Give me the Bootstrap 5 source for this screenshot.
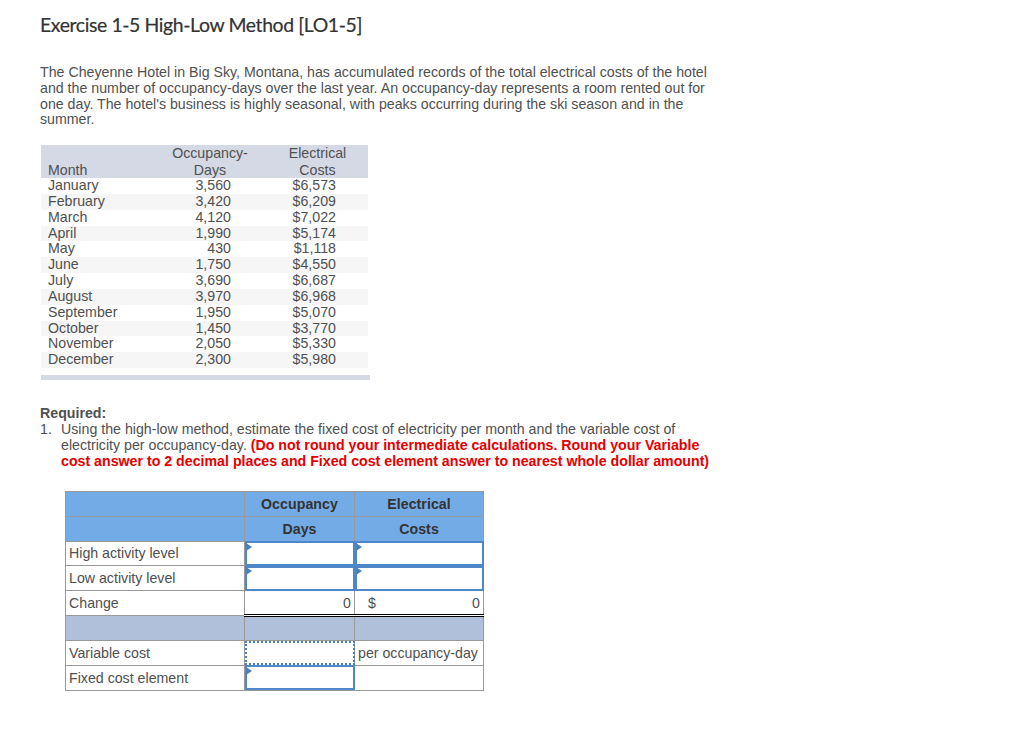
<!DOCTYPE html>
<html lang="en">
<head>
<meta charset="utf-8">
<title>Exercise 1-5</title>
<link href="https://cdn.jsdelivr.net/npm/bootstrap@5.3.0/dist/css/bootstrap.min.css" rel="stylesheet">
<style>
body{background:#fff;color:#505050;font-family:"Liberation Sans",Arial,sans-serif;font-size:14.2px;line-height:15.9px;}
.sheet{padding:13px 0 0 41px;width:1024px;}
.ex-title{font-family:Lato,"Open Sans",sans-serif;font-size:19.4px;line-height:24px;font-weight:400;color:#333;letter-spacing:-.38px;margin:0 0 28px -1px;-webkit-text-stroke:.2px #333;}
.intro{width:680px;line-height:15.75px;margin:0 0 17px -1px;}
.data-wrap{width:329px;border-bottom:5px solid #d5d9e5;padding-bottom:7px;}
.data-tbl{width:327px;table-layout:fixed;border-collapse:collapse;}
.data-tbl td,.data-tbl th{padding:0;font-weight:400;line-height:15.85px;height:15.85px;vertical-align:bottom;}
.data-tbl thead th{height:16.5px;line-height:16px;vertical-align:top;}
.data-tbl thead tr{background:#d5d9e5;}
.data-tbl tbody tr:nth-child(even){background:#f6f6f6;}
.data-tbl .c-m{width:119px;padding-left:7px;}
.data-tbl .c-o{width:93px;text-align:center;padding-left:7px;}
.data-tbl .c-e{width:115px;text-align:center;padding-left:14px;}
.data-tbl .num-o{text-align:right;padding-right:22px;}
.data-tbl .num-e{text-align:right;padding-right:32px;}
.req{margin:26px 0 0 -1px;width:690px;}
.req-head{font-weight:700;}
.req-row{display:flex;}
.req-n{width:21px;flex:none;}
.req-red{color:#e60000;font-weight:700;}
.calc{margin:21px 0 0 24px;width:418px;table-layout:fixed;border-collapse:collapse;}
.calc td{border:1px solid #999;height:24.9px;padding:0 3px;line-height:16px;position:relative;vertical-align:middle;}
.w1{width:179px;}.w2{width:110px;}.w3{width:129px;}
.blue td{background:#73abe6;text-align:center;font-weight:700;color:#333;letter-spacing:.05px;}
.slate td{background:#b0bfda;}
.ans{outline:2px solid #5087c8;outline-offset:-2px;}
.ans::before{content:"";position:absolute;left:1px;top:1px;border-left:6px solid #4a7fc0;border-top:4px solid transparent;border-bottom:4px solid transparent;}
.dots{outline:2px dotted #4a7fc0;outline-offset:-2px;}
.dbl td.tot{border-bottom:3px double #000;border-top:1px solid #000;}
.splitcell{display:flex;justify-content:space-between;padding:0 0 0 10px;}
</style>
</head>
<body>
<div class="sheet">
<h1 class="ex-title">Exercise 1-5 High-Low Method [LO1-5]</h1>
<p class="intro">The Cheyenne Hotel in Big Sky, Montana, has accumulated records of the total electrical costs of the hotel and the number of occupancy-days over the last year. An occupancy-day represents a room rented out for one day. The hotel's business is highly seasonal, with peaks occurring during the ski season and in the summer.</p>
<div class="data-wrap">
<table class="data-tbl">
<thead>
<tr><th class="c-m"></th><th class="c-o">Occupancy-</th><th class="c-e">Electrical</th></tr>
<tr><th class="c-m">Month</th><th class="c-o">Days</th><th class="c-e">Costs</th></tr>
</thead>
<tbody>
<tr><td class="c-m">January</td><td class="num-o">3,560</td><td class="num-e">$6,573</td></tr>
<tr><td class="c-m">February</td><td class="num-o">3,420</td><td class="num-e">$6,209</td></tr>
<tr><td class="c-m">March</td><td class="num-o">4,120</td><td class="num-e">$7,022</td></tr>
<tr><td class="c-m">April</td><td class="num-o">1,990</td><td class="num-e">$5,174</td></tr>
<tr><td class="c-m">May</td><td class="num-o">430</td><td class="num-e">$1,118</td></tr>
<tr><td class="c-m">June</td><td class="num-o">1,750</td><td class="num-e">$4,550</td></tr>
<tr><td class="c-m">July</td><td class="num-o">3,690</td><td class="num-e">$6,687</td></tr>
<tr><td class="c-m">August</td><td class="num-o">3,970</td><td class="num-e">$6,968</td></tr>
<tr><td class="c-m">September</td><td class="num-o">1,950</td><td class="num-e">$5,070</td></tr>
<tr><td class="c-m">October</td><td class="num-o">1,450</td><td class="num-e">$3,770</td></tr>
<tr><td class="c-m">November</td><td class="num-o">2,050</td><td class="num-e">$5,330</td></tr>
<tr><td class="c-m">December</td><td class="num-o">2,300</td><td class="num-e">$5,980</td></tr>
</tbody>
</table>
</div>
<div class="req">
<div class="req-head">Required:</div>
<div class="req-row"><span class="req-n">1.</span><span>Using the high-low method, estimate the fixed cost of electricity per month and the variable cost of electricity per occupancy-day. <span class="req-red">(Do not round your intermediate calculations. Round your Variable cost answer to 2 decimal places and Fixed cost element answer to nearest whole dollar amount)</span></span></div>
</div>
<table class="calc">
<colgroup><col class="w1"><col class="w2"><col class="w3"></colgroup>
<tbody>
<tr class="blue"><td></td><td>Occupancy</td><td>Electrical</td></tr>
<tr class="blue"><td></td><td>Days</td><td>Costs</td></tr>
<tr><td>High activity level</td><td class="ans"></td><td class="ans"></td></tr>
<tr><td>Low activity level</td><td class="ans"></td><td class="ans"></td></tr>
<tr class="dbl"><td>Change</td><td class="tot text-end">0</td><td class="tot"><div class="splitcell"><span>$</span><span>0</span></div></td></tr>
<tr class="slate"><td></td><td></td><td></td></tr>
<tr><td>Variable cost</td><td class="dots"></td><td>per occupancy-day</td></tr>
<tr><td>Fixed cost element</td><td class="ans"></td><td></td></tr>
</tbody>
</table>
</div>
<script src="https://cdn.jsdelivr.net/npm/bootstrap@5.3.0/dist/js/bootstrap.bundle.min.js"></script>
</body>
</html>
